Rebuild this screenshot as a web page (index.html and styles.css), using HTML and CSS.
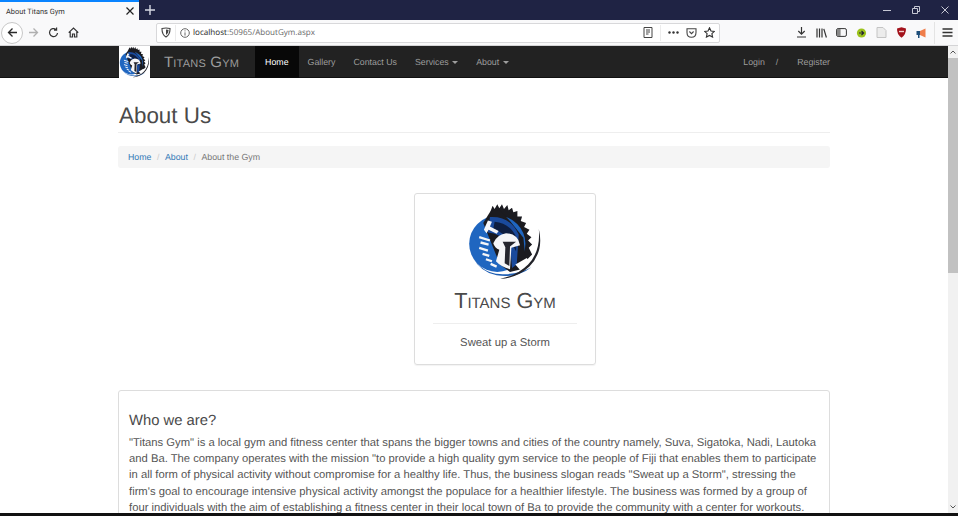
FILE: index.html
```html
<!DOCTYPE html>
<html lang="en">
<head>
    <meta charset="UTF-8">
    <meta name="viewport" content="width=device-width, initial-scale=1.0">
    <title>About Titans Gym</title>
    <link rel="stylesheet" href="styles.css">
</head>
<body>
    <svg class="defs" width="0" height="0">
        <symbol id="logo" viewBox="22 6 226 230">
            <path d="M92 30 L98 14 L104 24 L112 10 L118 22 L126 10 L132 24 L142 12 L146 28 L156 20 L160 34 L172 30 L172 46 L186 46 L182 60 L198 66 L192 78 L208 86 L200 98 L214 108 L204 118 L216 130 L206 140 L216 160 L186 190 L150 120 L100 60 Z" fill="#1b1b20"/>
            <circle cx="112" cy="128" r="84" fill="#1f66c0"/>
            <path d="M70 66 L92 30 L118 26 L150 60 L190 110 L196 170 L180 205 L150 212 L120 190 Z" fill="#1b1b20"/>
            <path d="M90 48 Q150 44 176 100 L170 190 L156 200 L150 130 Q120 96 84 94 Z" fill="#1a4a9c"/>
            <path d="M104 62 Q150 66 170 110 L168 150 Q140 96 100 84 Z" fill="#0e1e40"/>
            <path d="M100 126 Q110 100 138 96 Q174 98 180 132 L154 140 L150 204 Q122 196 108 180 L118 146 Q104 140 100 126 Z" fill="#f5f6f8"/>
            <path d="M128 122 L168 122 L150 136 L148 194 L134 186 L136 138 Z" fill="#25262e"/>
            <path d="M166 190 L200 170 L214 190 L180 206 Z" fill="#ffffff"/>
            <path d="M40 170 Q70 216 120 218 Q170 222 214 198 Q170 232 110 222 Q62 212 40 170 Z" fill="#1f5fb4"/>
            <path d="M236 84 Q252 150 208 196 Q170 232 120 232 Q170 224 204 190 Q242 150 236 84 Z" fill="#22232a"/>
            <path d="M72 86 L76 76 L84 58 L96 62 L90 76 L116 90 L110 98 L86 86 L80 96 Z" fill="#f5f6f8"/>
            <path d="M58 108 L90 118 M62 124 L86 130 M58 140 L84 148 M68 158 L88 164 M78 174 L96 180 M92 188 L110 196" stroke="#f5f6f8" stroke-width="7" fill="none"/>
        </symbol>
    </svg>

    <div class="tabbar">
        <div class="tab">
            <span class="tab-title">About Titans Gym</span>
            <svg class="tab-close" width="8" height="8" viewBox="0 0 8 8"><path d="M0.5 0.5 L7.5 7.5 M7.5 0.5 L0.5 7.5" stroke="#222" stroke-width="1.2"/></svg>
        </div>
        <svg class="new-tab" width="10" height="10" viewBox="0 0 10 10"><path d="M5 0 V10 M0 5 H10" stroke="#d8dae4" stroke-width="1.4"/></svg>
        <div class="win-buttons">
            <svg width="8" height="8" viewBox="0 0 8 8"><path d="M0 4.5 H8" stroke="#c6c8d4"/></svg>
            <svg width="8" height="8" viewBox="0 0 8 8"><path d="M0.5 2.5 H5.5 V7.5 H0.5 Z M2.5 2.5 V0.5 H7.5 V5.5 H5.5" stroke="#c6c8d4" fill="none"/></svg>
            <svg width="8" height="8" viewBox="0 0 8 8"><path d="M0.5 0.5 L7.5 7.5 M7.5 0.5 L0.5 7.5" stroke="#c6c8d4"/></svg>
        </div>
    </div>

    <div class="toolbar">
        <div class="back-btn">
            <svg width="11" height="11" viewBox="0 0 11 11"><path d="M10 5.5 H1.5 M5.5 1.5 L1.5 5.5 L5.5 9.5" stroke="#2b2b2b" stroke-width="1.3" fill="none"/></svg>
        </div>
        <svg class="tool-icon forward" width="11" height="11" viewBox="0 0 11 11"><path d="M1 5.5 H9.5 M5.5 1.5 L9.5 5.5 L5.5 9.5" stroke="#b0b0b0" stroke-width="1.3" fill="none"/></svg>
        <svg class="tool-icon reload" width="11" height="11" viewBox="0 0 11 11"><path d="M9.5 6 A4 4 0 1 1 8 2.4 M8.6 0.6 V3.2 H6" stroke="#333" stroke-width="1.2" fill="none"/></svg>
        <svg class="tool-icon home" width="11" height="11" viewBox="0 0 11 11"><path d="M0.7 5.6 L5.5 1 L10.3 5.6 M2.2 4.8 V10 H4.5 V7 H6.5 V10 H8.8 V4.8" stroke="#333" stroke-width="1.2" fill="none"/></svg>

        <div class="urlbar">
            <svg width="10" height="11" viewBox="0 0 10 11"><path d="M1 1.5 Q5 0.5 9 1.5 Q9.2 7.5 5 10 Q0.8 7.5 1 1.5 Z" stroke="#444" stroke-width="1.1" fill="none"/><path d="M5 2.5 Q7 2.5 7.6 3 Q7.5 6.5 5 8 Z" fill="#444"/></svg>
            <span class="url-sep"></span>
            <svg width="10" height="10" viewBox="0 0 10 10"><circle cx="5" cy="5" r="4.3" stroke="#666" fill="none"/><path d="M5 4.4 V7.6 M5 2.4 V3.4" stroke="#666"/></svg>
            <span class="url-text"><b>localhost</b>:50965/AboutGym.aspx</span>
            <div class="url-actions">
                <svg width="10" height="11" viewBox="0 0 10 11"><path d="M1 0.5 H9 V10.5 H1 Z" stroke="#444" fill="none"/><path d="M3 3 H7 M3 5 H7 M3 7 H5.5" stroke="#444"/></svg>
                <span class="url-sep"></span>
                <svg width="11" height="3" viewBox="0 0 11 3"><circle cx="1.5" cy="1.5" r="1.2" fill="#333"/><circle cx="5.5" cy="1.5" r="1.2" fill="#333"/><circle cx="9.5" cy="1.5" r="1.2" fill="#333"/></svg>
                <svg width="11" height="10" viewBox="0 0 11 10"><path d="M1 0.7 H10 V4.5 Q10 9.3 5.5 9.3 Q1 9.3 1 4.5 Z" stroke="#444" stroke-width="1.1" fill="none"/><path d="M3.4 3.5 L5.5 5.6 L7.6 3.5" stroke="#444" stroke-width="1.1" fill="none"/></svg>
                <svg width="11" height="11" viewBox="0 0 11 11"><path d="M5.5 0.8 L7 4 L10.4 4.4 L7.9 6.7 L8.6 10.1 L5.5 8.4 L2.4 10.1 L3.1 6.7 L0.6 4.4 L4 4 Z" stroke="#333" stroke-width="1.1" fill="none"/></svg>
            </div>
        </div>

        <div class="tool-right">
            <svg height="11" viewBox="0 0 10 11"><path d="M5 0 V7 M1.8 4 L5 7.2 L8.2 4 M0.5 10 H9.5" stroke="#333" stroke-width="1.2" fill="none"/></svg>
            <svg height="10" viewBox="0 0 11 10"><path d="M1 0.5 V9.5 M3.5 0.5 V9.5 M6 0.5 V9.5 M7.8 0.8 L10.4 9.5" stroke="#333" stroke-width="1.2" fill="none"/></svg>
            <svg height="9" viewBox="0 0 11 9"><rect x="0.6" y="0.6" width="9.8" height="7.8" rx="1.5" stroke="#333" fill="none"/><rect x="1" y="1" width="3.6" height="7" fill="#888"/></svg>
            <svg height="10" viewBox="0 0 10 10"><circle cx="5" cy="5" r="4.6" fill="#9cc31c"/><path d="M2.5 5 H7 M5 3 L7.2 5 L5 7" stroke="#223" stroke-width="1.1" fill="none"/></svg>
            <svg height="11" viewBox="0 0 10 11"><path d="M0.5 0.5 H6.5 L9.5 3.5 V10.5 H0.5 Z" fill="#ececec" stroke="#c4c4c4"/></svg>
            <svg height="11" viewBox="0 0 10 11"><path d="M0.5 1.5 L5 0.3 L9.5 1.5 Q9.7 7.5 5 10.7 Q0.3 7.5 0.5 1.5 Z" fill="#a3131c"/><path d="M2.5 4.5 H7.5" stroke="#f3d0d0" stroke-width="1.4"/></svg>
            <svg height="10" viewBox="0 0 11 10"><path d="M0.5 3 H4 V7 H0.5 Z" fill="#1f4f7a"/><path d="M4 3 L9.5 0.5 V9.5 L4 7 Z" fill="#ef7d4a"/><path d="M2 7 H3.5 V10 H2 Z" fill="#1f4f7a"/></svg>
            <span class="tool-sep"></span>
            <svg class="burger" height="9" viewBox="0 0 10 9"><path d="M0 1 H10 M0 4.5 H10 M0 8 H10" stroke="#333" stroke-width="1.4"/></svg>
        </div>
    </div>

    <div class="viewport">
        <div class="page">
            <nav class="navbar">
                <div class="container nav-inner">
                    <svg class="nav-logo"><use href="#logo"/></svg>
                    <a class="brand">Titans Gym</a>
                    <ul class="nav-links">
                        <li class="active"><a>Home</a></li>
                        <li><a>Gallery</a></li>
                        <li><a>Contact Us</a></li>
                        <li><a>Services <i class="caret"></i></a></li>
                        <li><a>About <i class="caret"></i></a></li>
                    </ul>
                    <div class="nav-right">
                        <a>Login</a>
                        <span>/</span>
                        <a>Register</a>
                    </div>
                </div>
            </nav>

            <div class="container">
                <h1 class="page-header">About Us</h1>
                <ol class="breadcrumb">
                    <li><a>Home</a></li>
                    <li><a>About</a></li>
                    <li>About the Gym</li>
                </ol>

                <div class="logo-card">
                    <svg class="card-logo"><use href="#logo"/></svg>
                    <h2>Titans Gym</h2>
                    <hr>
                    <p>Sweat up a Storm</p>
                </div>

                <div class="panel">
                    <h3>Who we are?</h3>
                    <p>"Titans Gym" is a local gym and fitness center that spans the bigger towns and cities of the country namely, Suva, Sigatoka, Nadi, Lautoka and Ba. The company operates with the mission "to provide a high quality gym service to the people of Fiji that enables them to participate in all form of physical activity without compromise for a healthy life. Thus, the business slogan reads "Sweat up a Storm", stressing the firm's goal to encourage intensive physical activity amongst the populace for a healthier lifestyle. The business was formed by a group of four individuals with the aim of establishing a fitness center in their local town of Ba to provide the community with a center for workouts.</p>
                </div>
            </div>
        </div>

        <div class="scrollbar">
            <svg class="scroll-arrow" width="6" height="4" viewBox="0 0 6 4"><path d="M0.5 3.5 L3 1 L5.5 3.5" stroke="#555" fill="none"/></svg>
            <div class="scroll-track"><div class="scroll-thumb"></div></div>
            <svg class="scroll-arrow" width="6" height="4" viewBox="0 0 6 4"><path d="M0.5 0.5 L3 3 L5.5 0.5" stroke="#555" fill="none"/></svg>
        </div>
    </div>
    <div class="bottom-edge"></div>
</body>
</html>
```

FILE: styles.css
```css
* {
    box-sizing: border-box;
}

html, body {
    height: 100%;
}

body {
    font-family: 'Liberation Sans', Arial, sans-serif;
    margin: 0;
    height: 516px;
    display: flex;
    flex-direction: column;
    overflow: hidden;
    background-color: #ffffff;
    color: #555555;
    text-rendering: geometricPrecision;
}

.defs {
    position: absolute;
}

/* browser chrome */
.tabbar {
    height: 20px;
    flex: none;
    display: flex;
    align-items: center;
    background-color: #1f2344;
}

.tab {
    width: 139px;
    height: 20px;
    display: flex;
    align-items: center;
    justify-content: space-between;
    padding: 0 5px 0 6px;
    background-color: #f9f9fa;
    border-top: 2px solid #0a84ff;
}

.tab-title {
    font-family: Roboto, sans-serif;
    font-size: 7.4px;
    color: #333333;
}

.new-tab {
    margin-left: 6px;
}

.win-buttons {
    margin-left: auto;
    display: flex;
    gap: 21px;
    padding-right: 9px;
}

.toolbar {
    height: 26px;
    flex: none;
    display: flex;
    align-items: center;
    padding-left: 1px;
    background-color: #f9f9fa;
    border-bottom: 1px solid #d4d4d6;
}

.back-btn {
    width: 22px;
    height: 22px;
    border: 1px solid #c8c8c8;
    border-radius: 50%;
    background-color: #ffffff;
    display: flex;
    align-items: center;
    justify-content: center;
}

.tool-icon.forward {
    margin-left: 5px;
}

.tool-icon.reload {
    margin-left: 9px;
}

.tool-icon.home {
    margin-left: 9px;
}

.urlbar {
    width: 564px;
    height: 20px;
    margin-left: 77px;
    display: flex;
    align-items: center;
    gap: 4px;
    padding: 0 4px;
    background-color: #ffffff;
    border: 1px solid #d8d8da;
    border-radius: 2px;
}

.url-sep {
    width: 1px;
    height: 16px;
    background-color: #ececec;
}

.url-text {
    flex: 1;
    margin-left: -1px;
    font-family: 'Open Sans', sans-serif;
    font-size: 8.1px;
    color: #6a6a6a;
}

.url-text b {
    font-weight: normal;
    color: #1c1c1c;
}

.url-actions {
    display: flex;
    align-items: center;
    gap: 7px;
}

.tool-right {
    margin-left: auto;
    display: flex;
    align-items: center;
    gap: 9px;
    padding-right: 5px;
}

.tool-right svg {
    width: 11px;
}

.tool-right .burger {
    margin-left: -2px;
}

.tool-sep {
    width: 1px;
    height: 22px;
    background-color: #e4e4e4;
    margin-left: -2px;
}

/* page */
.viewport {
    flex: 1;
    min-height: 0;
    display: flex;
}

.page {
    flex: 1;
    min-width: 0;
    overflow: hidden;
}

.scrollbar {
    width: 10px;
    flex: none;
    display: flex;
    flex-direction: column;
    align-items: center;
    justify-content: space-between;
    padding: 4px 0;
    background-color: #f1f1f1;
}

.scroll-track {
    flex: 1;
    width: 100%;
    padding: 4px 0;
}

.scroll-thumb {
    height: 215px;
    background-color: #c1c1c1;
}

.bottom-edge {
    height: 3px;
    flex: none;
    background-color: #111111;
}

.container {
    width: 712px;
    margin: 0 auto;
}

.navbar {
    height: 32px;
    background-color: #222222;
    border-bottom: 1px solid #111111;
}

.nav-inner {
    height: 32px;
    display: flex;
    align-items: stretch;
}

.nav-logo {
    width: 31px;
    height: 32px;
    margin-left: 1px;
    background-color: #ffffff;
}

.brand {
    margin-left: 14px;
    margin-right: 16px;
    align-self: center;
    font-size: 15px;
    font-variant: small-caps;
    letter-spacing: 0.2px;
    color: #9d9d9d;
}

.nav-links {
    list-style: none;
    display: flex;
    margin: 0;
    padding: 0;
}

.nav-links li {
    display: flex;
    align-items: center;
    padding: 0 9px;
    font-size: 8.8px;
    color: #9d9d9d;
}

.nav-links li.active {
    padding: 0 10px;
    background-color: #080808;
    color: #ffffff;
}

.caret {
    display: inline-block;
    margin-left: 1px;
    vertical-align: middle;
    border-top: 3px solid #9d9d9d;
    border-left: 3px solid transparent;
    border-right: 3px solid transparent;
}

.nav-right {
    margin-left: auto;
    display: flex;
    align-items: center;
    font-size: 8.8px;
    color: #9d9d9d;
}

.nav-right span {
    margin: 0 19px 0 11px;
}

.page-header {
    margin: 0;
    padding: 24px 0 4px 1px;
    height: 55px;
    font-size: 22.4px;
    font-weight: normal;
    line-height: 27px;
    color: #4a4a4a;
    border-bottom: 1px solid #eeeeee;
}

.breadcrumb {
    list-style: none;
    display: flex;
    align-items: center;
    height: 22px;
    margin: 13px 0 0;
    padding: 0 10px;
    font-size: 8.8px;
    color: #777777;
    background-color: #f5f5f5;
    border-radius: 3px;
}

.breadcrumb li a {
    color: #337ab7;
}

.breadcrumb li + li::before {
    content: "/";
    padding: 0 5.5px;
    color: #cccccc;
}

.logo-card {
    width: 182px;
    height: 172px;
    margin: 25px 0 0 296px;
    padding: 9px 18px 0;
    text-align: center;
    border: 1px solid #dddddd;
    border-radius: 3px;
    box-shadow: 0 1px 1px rgba(0, 0, 0, 0.05);
}

.card-logo {
    display: block;
    width: 76px;
    height: 77px;
    margin: 0 auto;
}

.logo-card h2 {
    margin: 0;
    padding-top: 9px;
    font-size: 21.7px;
    font-weight: normal;
    font-variant: small-caps;
    line-height: 24px;
    color: #4a4a4a;
}

.logo-card hr {
    margin: 10px 0 0;
    border: 0;
    border-top: 1px solid #eeeeee;
}

.logo-card p {
    margin: 12px 0 0;
    font-size: 11.3px;
    line-height: 15px;
}

.panel {
    margin-top: 25px;
    height: 200px;
    padding: 21px 10px 0;
    border: 1px solid #dddddd;
    border-radius: 3px;
}

.panel h3 {
    margin: 0 0 5px;
    font-size: 14.8px;
    font-weight: normal;
    line-height: 18px;
    color: #4a4a4a;
}

.panel p {
    margin: 0;
    font-size: 11.25px;
    line-height: 16.2px;
}
```
